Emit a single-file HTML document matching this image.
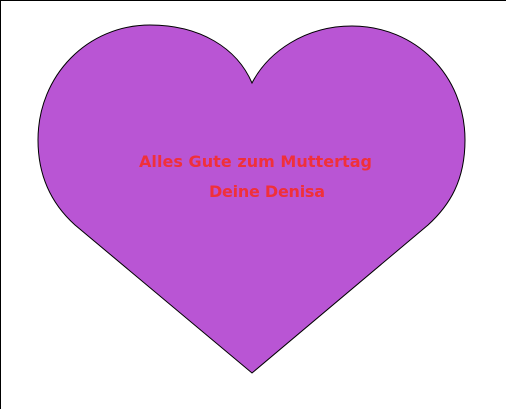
<!DOCTYPE html>
<html><head><style>
html,body{margin:0;padding:0;background:#fff;}
body{width:506px;height:409px;overflow:hidden;position:relative;}
svg{position:absolute;left:0;top:0;}
</style></head><body>
<svg width="506" height="409" xmlns="http://www.w3.org/2000/svg">
<line x1="0" y1="0.5" x2="506" y2="0.5" stroke="#000" stroke-width="1"/>
<line x1="0.5" y1="0" x2="0.5" y2="409" stroke="#000" stroke-width="1"/>
<path d="M252,83 C237,48 200,25 150,25 C88,25 38,75 38,140 C38,180 55,207 75,225 L252,373 L428,225 C450,205 465,180 465,140 C465,75 415,26 352,26 C305,26 268,52 252,83 Z" fill="#b955d4" stroke="#000" stroke-width="1"/>
<text x="139" y="167" font-family="DejaVu Sans, sans-serif" font-weight="bold" font-size="16" fill="#f0303a" textLength="233">Alles Gute zum Muttertag</text>
<text x="209" y="197" font-family="DejaVu Sans, sans-serif" font-weight="bold" font-size="16" fill="#f0303a" textLength="116">Deine Denisa</text>
</svg>
</body></html>
